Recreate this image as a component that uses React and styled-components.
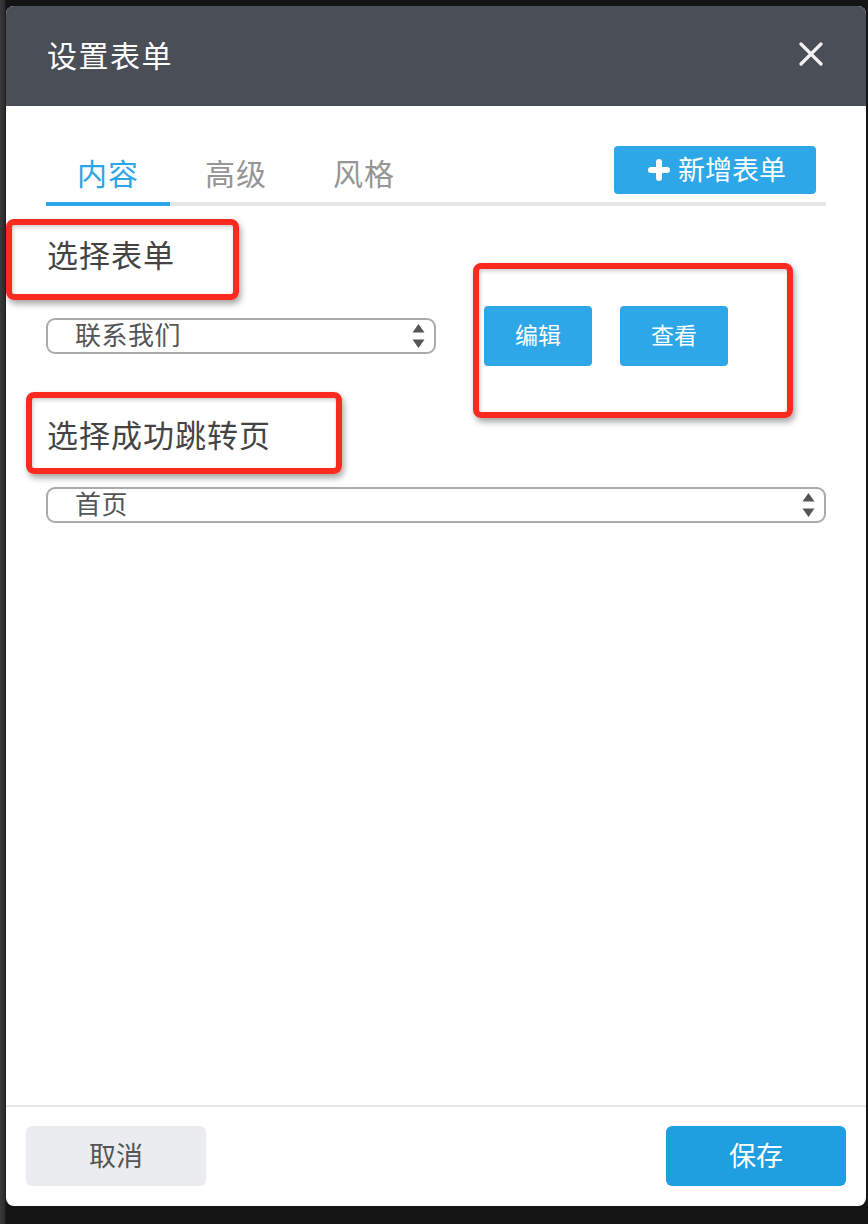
import React, { useState } from "react";
import styled, { createGlobalStyle } from "styled-components";

const GlobalStyle = createGlobalStyle`
  html, body {
    margin: 0;
    padding: 0;
    background: #141414;
  }
  body {
    font-family: "Noto Sans CJK SC", "Noto Sans", sans-serif;
  }
  * { box-sizing: border-box; }
`;

const Page = styled.div`
  width: 868px;
  height: 1224px;
  padding: 6px 2px 0 6px;
  background: linear-gradient(to right, #3a3a3a 0, #2a2a2a 5px, #141414 6px);
`;

const Dialog = styled.div`
  position: relative;
  width: 860px;
  height: 1200px;
  display: flex;
  flex-direction: column;
  background: #ffffff;
  border-radius: 8px;
  overflow: hidden;
`;

const Header = styled.div`
  height: 100px;
  flex: none;
  display: flex;
  align-items: center;
  justify-content: space-between;
  padding: 0 40px 4px 41px;
  background: #4a4e56;
`;

const Title = styled.h1`
  margin: 0;
  font-size: 30px;
  font-weight: 400;
  color: #ffffff;
  letter-spacing: 1.5px;
`;

const CloseButton = styled.button`
  width: 30px;
  height: 30px;
  padding: 0;
  border: 0;
  background: transparent;
  display: flex;
  align-items: center;
  justify-content: center;
  cursor: pointer;
`;

const Body = styled.div`
  flex: 1;
  padding: 40px 40px 0 40px;
  display: flex;
  flex-direction: column;
`;

const TabBar = styled.div`
  display: flex;
  align-items: flex-end;
  border-bottom: 4px solid #e6e6e6;
`;

const Tab = styled.div`
  width: 124px;
  margin-right: 4px;
  height: 60px;
  line-height: 52px;
  text-align: center;
  font-size: 30px;
  letter-spacing: 1px;
  color: ${(p) => (p.$active ? "#2ba6e6" : "#959595")};
  border-bottom: 4px solid ${(p) => (p.$active ? "#2ba6e6" : "transparent")};
  margin-bottom: -4px;
  cursor: pointer;
`;

const AddButton = styled.button`
  margin-left: auto;
  margin-right: 10px;
  margin-bottom: 8px;
  width: 202px;
  height: 48px;
  border: 0;
  border-radius: 4px;
  background: #2ea7e8;
  color: #ffffff;
  font-family: inherit;
  font-size: 27px;
  display: flex;
  align-items: center;
  justify-content: center;
  gap: 8px;
  padding: 0 0 4px 4px;
`;

const Label = styled.div`
  font-size: 31px;
  line-height: 40px;
  letter-spacing: 1px;
  color: #444444;
  margin-top: ${(p) => p.$top}px;
  margin-bottom: ${(p) => p.$bottom}px;
  padding-left: 1px;
`;

const FieldRow = styled.div`
  display: flex;
  align-items: center;
  gap: 48px;
`;

const Select = styled.div`
  width: ${(p) => p.$width}px;
  height: 36px;
  border: 2px solid #ababab;
  border-radius: 9px;
  display: flex;
  align-items: center;
  justify-content: space-between;
  padding: 0 9px 0 27px;
  font-size: 26px;
  letter-spacing: 0.5px;
  color: #555555;
`;

const SelectText = styled.span`
  line-height: 32px;
  padding-bottom: 5px;
`;

const ButtonGroup = styled.div`
  display: flex;
  gap: 28px;
`;

const ActionButton = styled.button`
  width: 108px;
  height: 60px;
  border: 0;
  border-radius: 4px;
  background: #2ea7e8;
  color: #ffffff;
  font-family: inherit;
  font-size: 23px;
  padding: 0 0 4px 0;
`;

const Footer = styled.div`
  flex: none;
  border-top: 2px solid #e8e8e8;
  padding: 19px 20px 20px 20px;
  display: flex;
  justify-content: space-between;
`;

const FooterButton = styled.button`
  width: 180px;
  height: 60px;
  border: 0;
  border-radius: 6px;
  font-family: inherit;
  font-size: 27px;
  padding: 0 0 4px 0;
  background: ${(p) => (p.$primary ? "#1f9fe0" : "#ebecef")};
  color: ${(p) => (p.$primary ? "#ffffff" : "#555555")};
`;

const Annotation = styled.div`
  position: absolute;
  border: 6px solid #fb2a1f;
  border-radius: 8px;
  box-shadow: 2px 4px 6px rgba(0, 0, 0, 0.35), inset 1px 2px 4px rgba(0, 0, 0, 0.2);
  pointer-events: none;
`;

const CloseIcon = () => (
  <svg width="24" height="24" viewBox="0 0 24 24">
    <path d="M2 2 L22 22 M22 2 L2 22" stroke="#f2f2f2" strokeWidth="3.2" strokeLinecap="round" />
  </svg>
);

const PlusIcon = () => (
  <svg width="22" height="22" viewBox="0 0 22 22" style={{ marginTop: 3 }}>
    <path d="M11 3 V19 M3 11 H19" stroke="#ffffff" strokeWidth="6" strokeLinecap="round" />
  </svg>
);

const SortArrows = () => (
  <svg width="13" height="25" viewBox="0 0 13 25">
    <path d="M6.5 0 L12.5 8.5 H0.5 Z" fill="#555555" />
    <path d="M0.5 15.5 H12.5 L6.5 24 Z" fill="#555555" />
  </svg>
);

export default function App() {
  const [tab, setTab] = useState(0);
  const tabs = ["内容", "高级", "风格"];
  return (
    <>
      <GlobalStyle />
      <Page>
        <Dialog>
          <Header>
            <Title>设置表单</Title>
            <CloseButton aria-label="关闭">
              <CloseIcon />
            </CloseButton>
          </Header>
          <Body>
            <TabBar>
              {tabs.map((t, i) => (
                <Tab key={t} $active={tab === i} onClick={() => setTab(i)}>
                  {t}
                </Tab>
              ))}
              <AddButton>
                <PlusIcon />
                新增表单
              </AddButton>
            </TabBar>
            <Label $top={28} $bottom={32}>选择表单</Label>
            <FieldRow>
              <Select $width={390}>
                <SelectText>联系我们</SelectText>
                <SortArrows />
              </Select>
              <ButtonGroup>
                <ActionButton>编辑</ActionButton>
                <ActionButton>查看</ActionButton>
              </ButtonGroup>
            </FieldRow>
            <Label $top={48} $bottom={33}>选择成功跳转页</Label>
            <FieldRow>
              <Select $width={780}>
                <SelectText>首页</SelectText>
                <SortArrows />
              </Select>
            </FieldRow>
          </Body>
          <Footer>
            <FooterButton>取消</FooterButton>
            <FooterButton $primary>保存</FooterButton>
          </Footer>
          <Annotation style={{ left: 0, top: 213, width: 233, height: 81 }} />
          <Annotation style={{ left: 467, top: 257, width: 320, height: 155 }} />
          <Annotation style={{ left: 20, top: 386, width: 316, height: 82 }} />
        </Dialog>
      </Page>
    </>
  );
}
